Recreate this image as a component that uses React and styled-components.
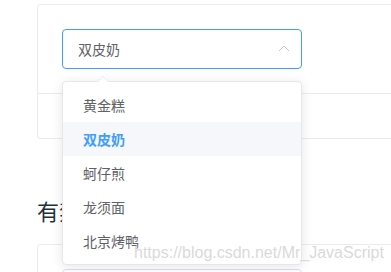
import React from "react";
import styled, { createGlobalStyle } from "styled-components";

const GlobalStyle = createGlobalStyle`
  html, body {
    margin: 0;
    padding: 0;
    background: #fff;
    overflow: hidden;
  }
  body {
    font-family: "Liberation Sans", "Noto Sans CJK SC", sans-serif;
  }
`;

const Page = styled.div`
  position: relative;
  padding: 4px 0 0 37px;
  width: 700px;
  height: 272px;
  box-sizing: border-box;
`;

const DemoBlock = styled.div`
  width: 620px;
  border: 1px solid #ebebeb;
  border-radius: 3px;
`;

const DemoSource = styled.div`
  position: relative;
  padding: 24px;
  border-bottom: 1px solid #ebebeb;
`;

const DemoControl = styled.div`
  height: 44px;
`;

const SelectBox = styled.div`
  position: relative;
  width: 240px;
`;

const SelectInput = styled.div`
  display: flex;
  align-items: center;
  justify-content: space-between;
  height: 40px;
  box-sizing: border-box;
  padding: 0 11px 0 15px;
  border: 1px solid ${(p) => (p.$focused ? "#409eff" : "#dcdfe6")};
  border-radius: 4px;
  font-size: 14px;
  color: #606266;
  font-family: "Noto Sans CJK SC", sans-serif;
`;

const Caret = styled.svg`
  width: 12px;
  height: 7px;
  margin-bottom: 1px;
`;

const Dropdown = styled.div`
  position: absolute;
  top: 52px;
  left: 0;
  width: 240px;
  box-sizing: border-box;
  padding: 6px 0;
  background: #fff;
  border: 1px solid #e4e7ed;
  border-radius: 4px;
  box-shadow: 0 2px 12px 0 rgba(0, 0, 0, 0.1);
  z-index: 10;

  &::before,
  &::after {
    content: "";
    position: absolute;
    left: 34px;
    width: 0;
    height: 0;
    border: 6px solid transparent;
    border-top-width: 0;
  }
  &::before {
    top: -6px;
    border-bottom-color: #e4e7ed;
  }
  &::after {
    top: -5px;
    border-bottom-color: #fff;
  }
`;

const Option = styled.div`
  height: 34px;
  line-height: 34px;
  padding: 0 20px;
  font-size: 14px;
  font-family: "Noto Sans CJK SC", sans-serif;
  color: ${(p) => (p.$selected ? "#409eff" : "#606266")};
  font-weight: ${(p) => (p.$selected ? 700 : 400)};
  background: ${(p) => (p.$hover ? "#f5f7fa" : "transparent")};
`;

const Heading = styled.h3`
  margin: 55px 0 17px;
  font-size: 22px;
  line-height: 33px;
  font-weight: 400;
  color: #1f2f3d;
  font-family: "Noto Sans CJK SC", sans-serif;
`;

const Watermark = styled.div`
  position: absolute;
  left: 134px;
  top: 244px;
  font-family: "Liberation Sans", sans-serif;
  font-size: 16px;
  line-height: 18px;
  color: #dadada;
  text-shadow: 0 0 1px #fff;
  z-index: 20;
  pointer-events: none;
`;

const options = ["黄金糕", "双皮奶", "蚵仔煎", "龙须面", "北京烤鸭"];

const ArrowUp = () => (
  <Caret viewBox="0 0 12 7">
    <polyline points="1,6 6,1 11,6" fill="none" stroke="#c0c4cc" strokeWidth="1" />
  </Caret>
);

const Select = ({ value, open, focused }) => (
  <SelectBox>
    <SelectInput $focused={focused}>
      <span>{value}</span>
      <ArrowUp />
    </SelectInput>
    {open && (
      <Dropdown>
        {options.map((o) => (
          <Option key={o} $selected={o === value} $hover={o === value}>
            {o}
          </Option>
        ))}
      </Dropdown>
    )}
  </SelectBox>
);

const App = () => {
  return (
    <Page>
      <GlobalStyle />
      <DemoBlock>
        <DemoSource>
          <Select value="双皮奶" open focused />
        </DemoSource>
        <DemoControl />
      </DemoBlock>
      <Heading>有禁用选项</Heading>
      <DemoBlock>
        <DemoSource>
          <Select value="" />
        </DemoSource>
      </DemoBlock>
      <Watermark>https://blog.csdn.net/Mr_JavaScript</Watermark>
    </Page>
  );
};

export default App;
